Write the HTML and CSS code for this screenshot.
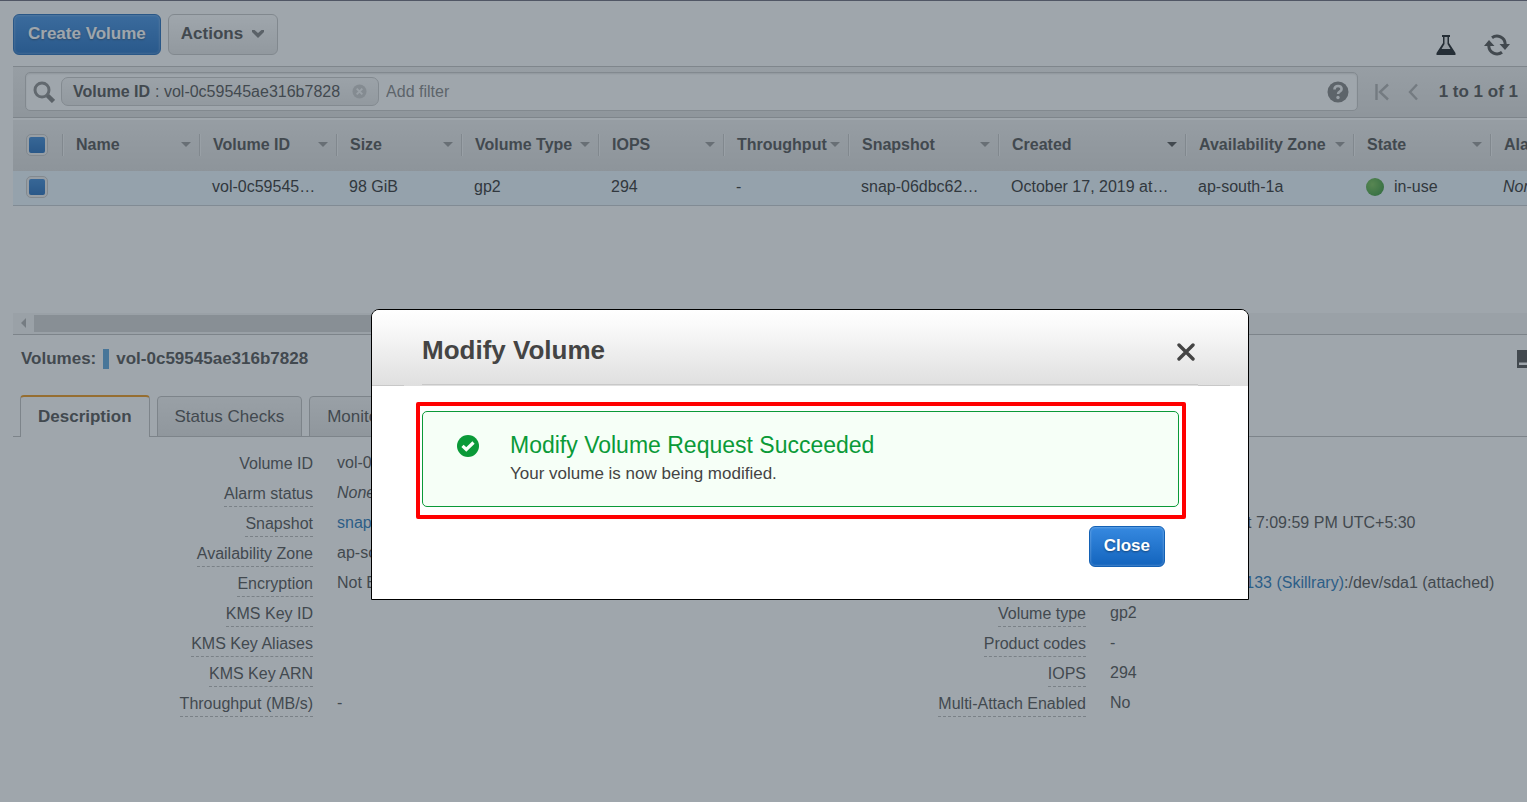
FILE: index.html
```html
<!DOCTYPE html>
<html lang="en">
<head>
<meta charset="utf-8">
<title>Volumes</title>
<link rel="stylesheet" href="styles.css">
</head>
<body>
<main class="app">
  <header class="toolbar">
    <div class="toolbar-actions">
      <button class="btn btn-primary" type="button">Create Volume</button>
      <button class="btn btn-default" type="button">Actions
        <svg class="chevron" viewBox="0 0 14 10" aria-hidden="true"><path d="M1 1h2.500L7 4l3.500-3H13v2L7 9 1 3z" fill="currentColor"/></svg>
      </button>
    </div>
    <div class="toolbar-icons">
      <button class="icon-btn" type="button" aria-label="Experiments">
        <svg class="icon-flask" viewBox="0 0 20 20"><path d="M6 0h8v2h-1v6l6.500 10v2H.5v-2L7 8V2H6z" fill="#0a0e12"/><path d="M8.500 2h3v7l3 5h-9l3-5z" fill="#e8e8e8"/></svg>
      </button>
      <button class="icon-btn" type="button" aria-label="Refresh">
        <svg class="icon-refresh" viewBox="0 0 26 22"><path d="M8 3.800A8.200 8.200 0 0 1 21.200 10M18 18.200A8.200 8.200 0 0 1 4.800 12" fill="none" stroke="#444" stroke-width="3"/><path d="M15.500 10H26l-5 6zM0 12h10.500L5 6z" fill="#444"/></svg>
      </button>
    </div>
  </header>

  <section class="filter-bar">
    <div class="filter-box">
      <svg class="icon-search" viewBox="0 0 22 22" aria-hidden="true"><circle cx="9" cy="9" r="7" fill="none" stroke="#858585" stroke-width="3"/><path d="M14.500 14.500l6 6" stroke="#777" stroke-width="4.500"/></svg>
      <span class="chip"><b>Volume ID</b><span>: vol-0c59545ae316b7828</span>
        <button class="icon-btn" type="button" aria-label="Remove filter"><svg class="icon-remove" viewBox="0 0 16 16"><circle cx="8" cy="8" r="7.500" fill="#c9c9c9"/><path d="M5 5l6 6M11 5l-6 6" stroke="#f4f4f4" stroke-width="2"/></svg></button>
      </span>
      <input class="filter-input" type="text" placeholder="Add filter" aria-label="Add filter">
      <button class="icon-btn" type="button" aria-label="Help"><svg class="icon-help" viewBox="0 0 22 22"><circle cx="11" cy="11" r="10.500" fill="#7b7b7b"/><path d="M7.500 8.500q0-3.500 3.600-3.500 3.500 0 3.500 3 0 1.700-1.900 2.700-1.600.8-1.600 2.300" fill="none" stroke="#f2f2f2" stroke-width="2.600"/><circle cx="11" cy="16.500" r="1.700" fill="#f2f2f2"/></svg></button>
    </div>
    <nav class="pager" aria-label="Pages">
      <button class="icon-btn" type="button" aria-label="First page"><svg class="icon-first" viewBox="0 0 14 18"><path d="M1.500 1v16M13 1.500L5 9l8 7.500" fill="none" stroke="#a8a8a8" stroke-width="2.400"/></svg></button>
      <button class="icon-btn" type="button" aria-label="Previous page"><svg class="icon-prev" viewBox="0 0 10 18"><path d="M9 1.500L2 9l7 7.500" fill="none" stroke="#a8a8a8" stroke-width="2.400"/></svg></button>
      <span class="pager-text">1 to 1 of 1</span>
    </nav>
  </section>

  <section class="grid-area">
    <table class="volumes">
      <colgroup><col class="w-check"><col class="w-m"><col class="w-m"><col class="w-s"><col class="w-m"><col class="w-s"><col class="w-s"><col class="w-l"><col class="w-created"><col class="w-zone"><col class="w-m"><col class="w-m"></colgroup>
      <thead>
        <tr>
          <th class="check"><input class="tick" type="checkbox" checked aria-label="Select all"></th>
          <th><div class="head">Name<i class="caret"></i></div></th>
          <th><div class="head">Volume ID<i class="caret"></i></div></th>
          <th><div class="head">Size<i class="caret"></i></div></th>
          <th><div class="head">Volume Type<i class="caret"></i></div></th>
          <th><div class="head">IOPS<i class="caret"></i></div></th>
          <th><div class="head">Throughput<i class="caret"></i></div></th>
          <th><div class="head">Snapshot<i class="caret"></i></div></th>
          <th><div class="head">Created<i class="caret caret-active"></i></div></th>
          <th><div class="head">Availability Zone<i class="caret"></i></div></th>
          <th><div class="head">State<i class="caret"></i></div></th>
          <th><div class="head">Alarm</div></th>
        </tr>
      </thead>
      <tbody>
        <tr>
          <td class="check"><input class="tick" type="checkbox" checked aria-label="Select volume"></td>
          <td></td>
          <td>vol-0c59545…</td>
          <td>98 GiB</td>
          <td>gp2</td>
          <td>294</td>
          <td>-</td>
          <td>snap-06dbc62…</td>
          <td>October 17, 2019 at…</td>
          <td>ap-south-1a</td>
          <td><span class="state"><i class="dot"></i>in-use</span></td>
          <td><em>None</em></td>
        </tr>
      </tbody>
    </table>
    <div class="scrollbar"><i class="scroll-arrow"></i><i class="scroll-thumb"></i></div>
  </section>

  <section class="details">
    <div class="details-head">
      <h2 class="details-title"><span>Volumes:</span><i class="marker"></i><span>vol-0c59545ae316b7828</span></h2>
      <button class="icon-btn" type="button" aria-label="Panel layout"><svg class="icon-panel" viewBox="0 0 18 18"><path d="M0 0h18v18H0z" fill="#444"/><path d="M2 12.500h14V15H2z" fill="#fff"/></svg></button>
    </div>
    <div class="tabs" role="tablist">
      <button class="tab tab-active" role="tab" type="button" aria-selected="true">Description</button>
      <button class="tab" role="tab" type="button">Status Checks</button>
      <button class="tab" role="tab" type="button">Monitoring</button>
    </div>
    <div class="panels">
      <dl class="props">
        <div class="prop"><dt><span class="plain">Volume ID</span></dt><dd>vol-0c59545ae316b7828</dd></div>
        <div class="prop"><dt><span>Alarm status</span></dt><dd><em>None</em></dd></div>
        <div class="prop"><dt><span>Snapshot</span></dt><dd><a href="#snapshot">snap-06dbc62</a></dd></div>
        <div class="prop"><dt><span>Availability Zone</span></dt><dd>ap-south-1a</dd></div>
        <div class="prop"><dt><span>Encryption</span></dt><dd>Not Encrypted</dd></div>
        <div class="prop"><dt><span>KMS Key ID</span></dt><dd></dd></div>
        <div class="prop"><dt><span>KMS Key Aliases</span></dt><dd></dd></div>
        <div class="prop"><dt><span>KMS Key ARN</span></dt><dd></dd></div>
        <div class="prop"><dt><span>Throughput (MB/s)</span></dt><dd>-</dd></div>
      </dl>
      <dl class="props">
        <div class="prop"></div>
        <div class="prop"></div>
        <div class="prop"><dt><span>Created</span></dt><dd>October 17, 2019 at 7:09:59 PM UTC+5:30</dd></div>
        <div class="prop"></div>
        <div class="prop"><dt></dt><dd><a class="instance" href="#instance">133 (Skillrary)</a>:/dev/sda1 (attached)</dd></div>
        <div class="prop"><dt><span>Volume type</span></dt><dd>gp2</dd></div>
        <div class="prop"><dt><span>Product codes</span></dt><dd>-</dd></div>
        <div class="prop"><dt><span>IOPS</span></dt><dd>294</dd></div>
        <div class="prop"><dt><span>Multi-Attach Enabled</span></dt><dd>No</dd></div>
      </dl>
    </div>
  </section>
</main>

<div class="backdrop">
  <section class="modal" role="dialog" aria-modal="true" aria-labelledby="modal-title">
    <header class="modal-head">
      <div class="modal-bar">
        <h1 class="modal-title" id="modal-title">Modify Volume</h1>
        <button class="icon-btn" type="button" aria-label="Close dialog"><svg class="icon-close" viewBox="0 0 18 18"><path d="M2 2l14 14M16 2L2 16" stroke="#444" stroke-width="3.400" stroke-linecap="round"/></svg></button>
      </div>
    </header>
    <div class="highlight">
      <div class="notice" role="status">
        <svg class="icon-ok" viewBox="0 0 22 22" aria-hidden="true"><circle cx="11" cy="11" r="11" fill="#0a9a38"/><path d="M5.500 10.800l3.800 3.700 7.200-7" fill="none" stroke="#f7fff8" stroke-width="3.200"/></svg>
        <div>
          <p class="notice-title">Modify Volume Request Succeeded</p>
          <p class="notice-text">Your volume is now being modified.</p>
        </div>
      </div>
    </div>
    <footer class="modal-foot">
      <button class="btn btn-primary" type="button">Close</button>
    </footer>
  </section>
</div>
</body>
</html>
```
FILE: styles.css
```css
* { box-sizing: border-box; }

html, body { height: 100%; }

body {
  margin: 0;
  overflow: hidden;
  background: #fff;
  color: #444;
  font: 16px/20px "Liberation Sans", Arial, sans-serif;
}

button { font: inherit; color: inherit; }
svg { display: block; }
a { color: #146eb4; text-decoration: none; }
h1, h2, p, dl, dd { margin: 0; }

.app {
  height: 100%;
  overflow: hidden;
  padding-left: 13px;
  border-top: 1px solid #605f70;
}

.icon-btn { padding: 0; border: 0; background: none; }

.btn {
  height: 41px;
  padding: 0 13px;
  border-radius: 6px;
  font-size: 17px;
  font-weight: bold;
}

.btn-primary {
  padding: 0 14px 2px;
  border: 1px solid #1361b5;
  background: linear-gradient(#3689e0, #1364bd);
  box-shadow: inset 0 0 2px 1px rgba(255, 255, 255, .2);
  color: #fff;
  text-shadow: 0 1px 2px rgba(0, 0, 0, .4);
}

.btn-default {
  display: flex;
  align-items: center;
  gap: 8px;
  padding: 0 12px 2px;
  border: 1px solid #c3c3c3;
  background: linear-gradient(#fff, #e4e4e4);
}

.chevron { width: 14px; height: 10px; color: #777; }

/* Toolbar */
.toolbar {
  display: flex;
  justify-content: space-between;
  height: 65px;
  padding: 13px 17px 0 0;
}

.toolbar-actions { display: flex; align-items: flex-start; gap: 7px; }
.toolbar-icons { display: flex; align-items: center; gap: 28px; padding-top: 10px; height: 52px; }
.icon-flask { width: 20px; height: 20px; }
.icon-refresh { width: 26px; height: 22px; }

/* Filter bar */
.filter-bar {
  display: flex;
  align-items: center;
  gap: 17px;
  height: 52px;
  padding: 0 9px 1px 12px;
  border-top: 1px solid #bebebe;
  border-bottom: 1px solid #bdbdbd;
  background: linear-gradient(#efefef, #dedede);
}

.filter-box {
  flex: 1;
  display: flex;
  align-items: center;
  height: 39px;
  padding: 0 8px 0 7px;
  border: 1px solid #c4c4c4;
  border-radius: 5px;
  background: #fff;
  box-shadow: inset 0 1px 2px #ddd;
}

.icon-search { width: 22px; height: 22px; margin-right: 6px; }

.chip {
  display: flex;
  align-items: center;
  gap: 5px;
  height: 29px;
  padding: 0 11px;
  border: 1px solid #c6c6c6;
  border-radius: 7px;
  background: linear-gradient(#f7f7f7, #e5e5e5);
}

.chip .icon-btn { margin-left: 7px; }
.icon-remove { width: 15px; height: 15px; }

.filter-input {
  flex: 1;
  min-width: 0;
  padding: 0 7px;
  border: 0;
  outline: 0;
  background: none;
  font: inherit;
}

.filter-input::placeholder { color: #7b7b7b; opacity: 1; }
.icon-help { width: 22px; height: 22px; }
.pager { display: flex; align-items: center; }
.icon-first { width: 14px; height: 18px; margin-right: 19px; }
.icon-prev { width: 10px; height: 18px; margin-right: 21px; }
.pager-text { font-size: 17px; font-weight: bold; white-space: nowrap; }

/* Table */
.grid-area {
  display: flex;
  flex-direction: column;
  justify-content: space-between;
  height: 217px;
  padding-top: 2px;
  overflow: hidden;
  border-bottom: 1px solid #bbb;
}

.volumes {
  width: 100%;
  table-layout: fixed;
  border-collapse: collapse;
  white-space: nowrap;
}

.w-check { width: 49px; }
.w-s { width: 125px; }
.w-m { width: 137px; }
.w-l { width: 150px; }
.w-created { width: 187px; }
.w-zone { width: 168px; }

.volumes th {
  height: 51px;
  padding: 0 0 2px;
  text-align: left;
}

.volumes thead { background: linear-gradient(#ededed, #dbdbdb); }

.head {
  display: flex;
  align-items: center;
  justify-content: space-between;
  height: 22px;
  padding: 0 8px 0 13px;
  border-left: 1px solid #c2c2c2;
  box-shadow: inset 1px 0 #f3f3f3;
}

.caret {
  border: 5px solid transparent;
  border-top-color: #919191;
  border-bottom: 0;
}

.caret-active { border-top-color: #444; }

.volumes td {
  height: 34px;
  padding: 0 0 1px 13px;
  border-bottom: 1px solid #c3c9ce;
  color: #222;
}

.volumes tbody { background: #ebf6fe; }
.volumes .check { padding-left: 13px; line-height: 0; }

.tick {
  appearance: none;
  width: 22px;
  height: 22px;
  margin: 0;
  border: 1px solid #c4c4c4;
  border-radius: 5px;
  background: #eee;
}

.tick:checked {
  background: linear-gradient(#2f80d3, #1563b8) content-box, #eee;
  padding: 2px;
}

.state { display: flex; align-items: center; gap: 10px; }

.dot {
  width: 18px;
  height: 18px;
  border-radius: 50%;
  background: radial-gradient(circle at 35% 35%, #71c04b, #3b9b33 65%, #188024);
}

.scrollbar {
  display: flex;
  align-items: center;
  height: 21px;
  padding-bottom: 1px;
  background: #f4f4f4;
}

.scroll-arrow {
  margin: 0 8px;
  border: 5px solid transparent;
  border-right-color: #ababab;
  border-left: 0;
}

.scroll-thumb { width: 72%; height: 17px; background: #d0d0d0; }

/* Details */
.details { width: calc(100% + 32px); }

.details-head {
  display: flex;
  align-items: center;
  justify-content: space-between;
  height: 48px;
  padding: 0 24px 0 8px;
}

.details-title {
  display: flex;
  align-items: center;
  gap: 7px;
  font-size: 17px;
  line-height: 20px;
}

.marker { width: 6px; height: 20px; background: #519ed8; }

.icon-panel { width: 18px; height: 18px; }

.tabs {
  display: flex;
  align-items: flex-end;
  gap: 7px;
  margin-top: 12px;
  padding-left: 7px;
  box-shadow: inset 0 -1px #bbb;
}

.tab {
  height: 41px;
  padding: 0 17px;
  border: 1px solid #bbb;
  border-radius: 4px 4px 0 0;
  background: linear-gradient(#f3f3f3, #e0e0e0);
  font-size: 17px;
}

.tab-active {
  height: 42px;
  border-top: 2px solid #ec8f09;
  border-bottom: 0;
  background: #fff;
  font-weight: bold;
}

.panels {
  display: grid;
  grid-template-columns: 1fr 1fr;
  padding-top: 16px;
}

.prop {
  display: grid;
  grid-template-columns: 300px 1fr;
  column-gap: 24px;
  height: 30px;
  white-space: nowrap;
}

.prop dt { text-align: right; }

.prop dt span {
  display: inline-block;
  padding: 1px 0 2px;
  border-bottom: 1px dashed #b5b5b5;
}

.prop dt .plain { border-bottom: 0; }

.instance { display: inline-block; width: 234px; text-align: right; }

/* Dialog */
.backdrop {
  position: fixed;
  inset: 0;
  display: flex;
  justify-content: center;
  align-items: flex-start;
  padding: 309px 0 0 93px;
  background: rgba(64, 77, 89, .5);
}

.modal {
  width: 878px;
  max-width: 100%;
  border: 1px solid #000;
  border-radius: 8px 8px 0 0;
  background: #fff;
}

.modal-head {
  padding: 0 50px 1px;
  border-radius: 7px 7px 0 0;
  background:
    linear-gradient(#c8c8c8, #c8c8c8) 0 100% / 32px 1px no-repeat,
    linear-gradient(#c8c8c8, #c8c8c8) calc(100% - 18px) 100% / 32px 1px no-repeat,
    linear-gradient(#fff, #fafafa 20%, #dfdfdf);
}

.modal-bar {
  display: flex;
  align-items: center;
  justify-content: space-between;
  height: 75px;
  padding: 6px 3px 0 0;
  border-bottom: 1px solid #c8c8c8;
}

.modal-title { font-size: 26px; line-height: 32px; }
.icon-close { width: 18px; height: 18px; margin-top: 4px; }

.highlight {
  margin: 16px 62px 0 44px;
  padding: 5px 3px 8px 2px;
  border: 4px solid #f00;
  border-radius: 2px;
}

.notice {
  display: flex;
  align-items: flex-start;
  gap: 31px;
  height: 96px;
  padding: 19px 34px;
  border: 1px solid #0a9a38;
  border-radius: 5px;
  background: #f6fff7;
}

.icon-ok { width: 22px; height: 22px; margin-top: 4px; }
.notice-title { color: #0a9a38; font-size: 23px; line-height: 28px; }
.notice-text { font-size: 17px; line-height: 30px; }

.modal-foot {
  display: flex;
  justify-content: flex-end;
  padding: 7px 83px 32px;
}
```
